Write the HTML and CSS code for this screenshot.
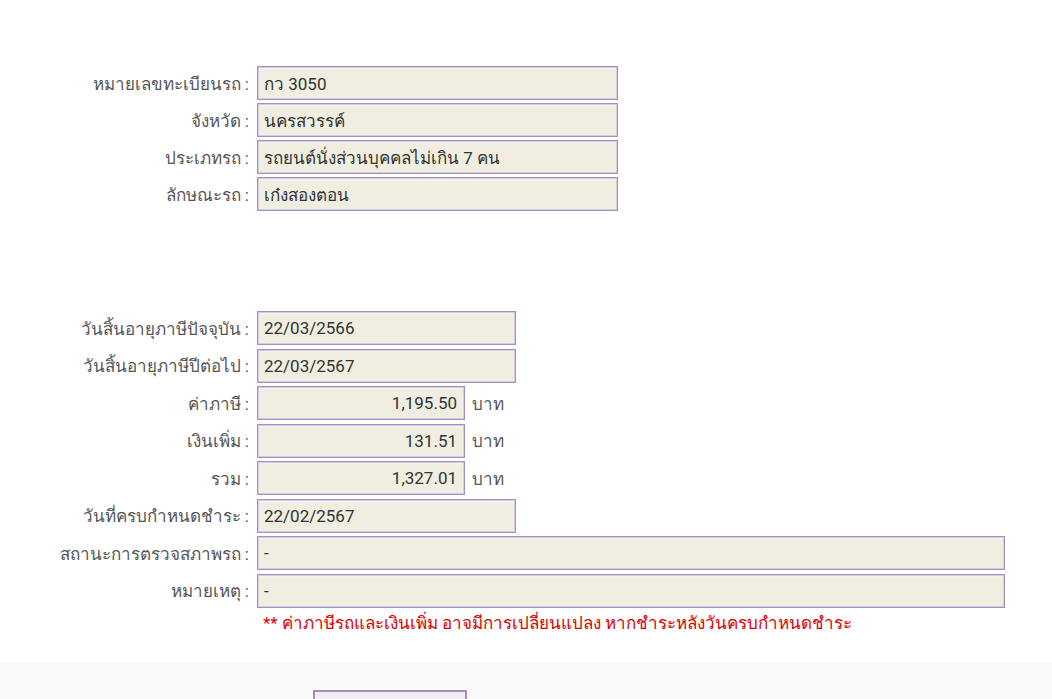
FILE: index.html
```html
<!DOCTYPE html>
<html lang="th">
<head>
<meta charset="utf-8">
<title>ข้อมูลรถ</title>
<link rel="stylesheet" href="styles.css">
</head>
<body>
<main class="page">
  <section class="group group-car">
    <div class="row"><label class="lbl">หมายเลขทะเบียนรถ :</label><div class="box w-md">กว 3050</div></div>
    <div class="row"><label class="lbl">จังหวัด :</label><div class="box w-md">นครสวรรค์</div></div>
    <div class="row"><label class="lbl">ประเภทรถ :</label><div class="box w-md">รถยนต์นั่งส่วนบุคคลไม่เกิน 7 คน</div></div>
    <div class="row"><label class="lbl">ลักษณะรถ :</label><div class="box w-md">เก๋งสองตอน</div></div>
  </section>
  <section class="group group-tax">
    <div class="row"><label class="lbl">วันสิ้นอายุภาษีปัจจุบัน :</label><div class="box w-date">22/03/2566</div></div>
    <div class="row"><label class="lbl">วันสิ้นอายุภาษีปีต่อไป :</label><div class="box w-date">22/03/2567</div></div>
    <div class="row"><label class="lbl">ค่าภาษี :</label><div class="box w-money num">1,195.50</div><span class="unit">บาท</span></div>
    <div class="row"><label class="lbl">เงินเพิ่ม :</label><div class="box w-money num">131.51</div><span class="unit">บาท</span></div>
    <div class="row"><label class="lbl">รวม :</label><div class="box w-money num">1,327.01</div><span class="unit">บาท</span></div>
    <div class="row"><label class="lbl">วันที่ครบกำหนดชำระ :</label><div class="box w-date">22/02/2567</div></div>
    <div class="row"><label class="lbl">สถานะการตรวจสภาพรถ :</label><div class="box w-wide">-</div></div>
    <div class="row"><label class="lbl">หมายเหตุ :</label><div class="box w-wide">-</div></div>
    <p class="note">** ค่าภาษีรถและเงินเพิ่ม อาจมีการเปลี่ยนแปลง หากชำระหลังวันครบกำหนดชำระ</p>
  </section>
</main>
<footer class="footer">
  <button class="btn" type="button"></button>
</footer>
</body>
</html>
```
FILE: styles.css
```css
html, body {
  margin: 0;
  padding: 0;
  background: #ffffff;
}
body {
  font-family: Roboto, "Noto Sans", "DejaVu Sans", sans-serif;
  font-size: 17px;
  color: #333333;
}
.page {
  padding-top: 66px;
  height: 662px;
  box-sizing: border-box;
}
.group {
  display: flex;
  flex-direction: column;
  gap: 3px;
}
.group-tax {
  margin-top: 100px;
  gap: 3.5px;
}
.row {
  display: flex;
  align-items: center;
  height: 34px;
}
.lbl {
  width: 257px;
  text-align: right;
  color: #555555;
  padding-right: 8px;
  box-sizing: border-box;
  flex: none;
  white-space: nowrap;
}
.box {
  height: 34px;
  box-sizing: border-box;
  border: 1px solid #a58fc2;
  box-shadow: inset 0 0 0 1px #d6cbe4;
  background: linear-gradient(#f6f6ee 0, #efeee1 4px, #efeee1 100%);
  padding: 0 7px 0 6px;
  display: flex;
  align-items: center;
  color: #333333;
  flex: none;
  white-space: nowrap;
}
.w-md { width: 361px; }
.w-date { width: 259px; }
.w-money { width: 208px; }
.w-wide { width: 748px; }
.num { justify-content: flex-end; }
.unit {
  margin-left: 7px;
  color: #555555;
}
.note {
  margin: 2px 0 0 263px;
  line-height: 20px;
  color: #dd0000;
  font-size: 17px;
}
.footer {
  background: #fafafa;
  height: 37px;
  position: relative;
  overflow: hidden;
}
.btn {
  position: absolute;
  left: 313px;
  top: 28px;
  width: 154px;
  height: 40px;
  border: 2px solid #a58fc2;
  background: #f0eef3;
}
```
